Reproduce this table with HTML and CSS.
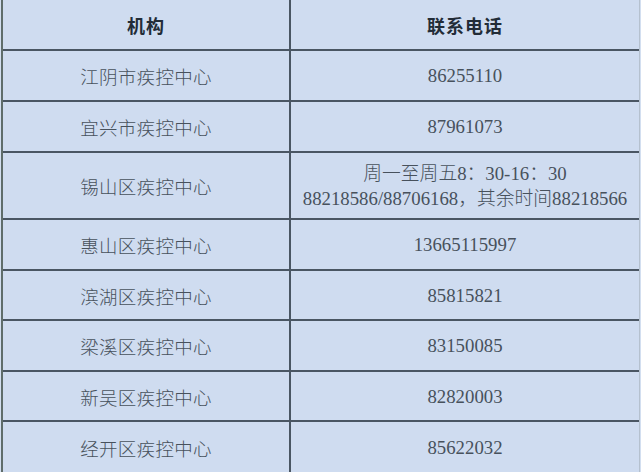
FILE: index.html
```html
<!DOCTYPE html>
<html lang="zh-CN">
<head>
<meta charset="utf-8">
<title>疾控中心联系电话</title>
<link rel="stylesheet" href="styles.css">
</head>
<body>
<div class="sheet">
  <div class="cell head org">机构</div>
  <div class="cell head">联系电话</div>

  <div class="cell org">江阴市疾控中心</div>
  <div class="cell num">86255110</div>

  <div class="cell org">宜兴市疾控中心</div>
  <div class="cell num">87961073</div>

  <div class="cell org">锡山区疾控中心</div>
  <div class="cell num multi">周一至周五8：30-16：30<br>88218586/88706168，其余时间88218566</div>

  <div class="cell org">惠山区疾控中心</div>
  <div class="cell num">13665115997</div>

  <div class="cell org">滨湖区疾控中心</div>
  <div class="cell num">85815821</div>

  <div class="cell org">梁溪区疾控中心</div>
  <div class="cell num">83150085</div>

  <div class="cell org">新吴区疾控中心</div>
  <div class="cell num">82820003</div>

  <div class="cell org last">经开区疾控中心</div>
  <div class="cell num last">85622032</div>
</div>
</body>
</html>
```

FILE: styles.css
```css
html, body {
  margin: 0;
  padding: 0;
  background: #d3dff0;
}

.sheet {
  display: grid;
  grid-template-columns: 288px 348px;
  grid-template-rows: 51px 51px 51px 67px 51px 50px 51px 50px 50px;
  width: 636px;
  margin-left: 1px;
  border-left: 2px solid #5f6d6b;
  border-right: 1px solid #b5c1cf;
  background: #cfdcf0;
  font-family: "Noto Sans CJK SC", "Noto Sans", sans-serif;
  font-weight: 300;
  font-size: 18.5px;
  color: #47515c;
}

.cell {
  display: flex;
  align-items: center;
  justify-content: center;
  text-align: center;
  box-sizing: border-box;
  border-bottom: 2px solid #4a5663;
}

.org {
  border-right: 2px solid #4a5663;
  letter-spacing: 0.3px;
  padding-top: 1px;
}

.head {
  font-weight: 700;
  color: #222c37;
  font-family: "Noto Sans CJK SC", sans-serif;
  font-size: 18px;
  letter-spacing: 1px;
}

.num {
  font-family: "Liberation Serif", "Noto Sans CJK SC", serif;
  font-weight: 400;
  font-size: 18.8px;
  padding-top: 1px;
}

.multi {
  line-height: 25px;
  font-weight: 300;
}

.last {
  border-bottom: none;
}
```
